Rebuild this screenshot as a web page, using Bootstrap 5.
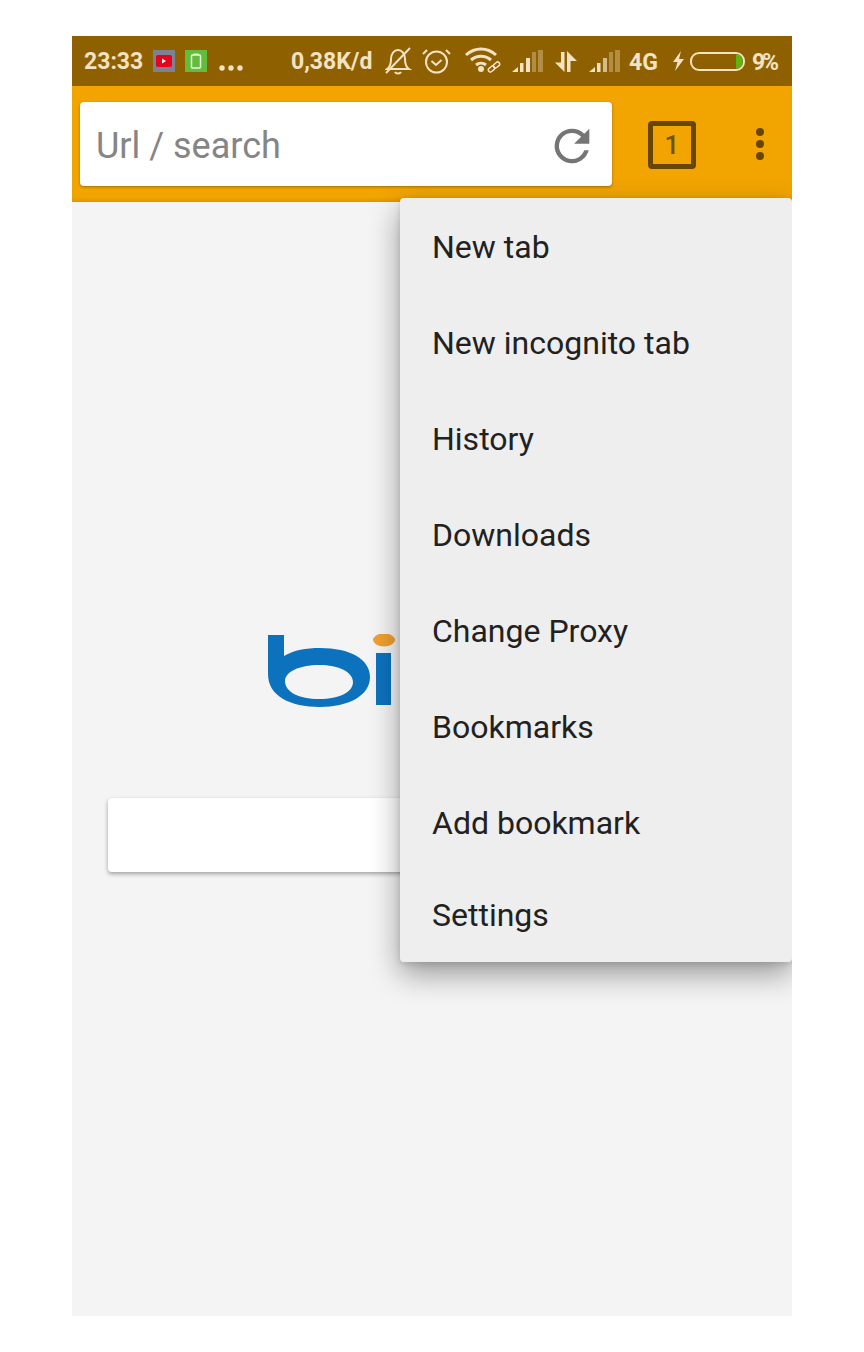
<!DOCTYPE html>
<html lang="en">
<head>
  <meta charset="UTF-8"/>
  <meta name="viewport" content="width=device-width, initial-scale=1.0"/>
  <title>Browser menu</title>
  <link href="https://cdn.jsdelivr.net/npm/bootstrap@5.3.0/dist/css/bootstrap.min.css" rel="stylesheet"/>
  <style>
    body {
      background: #fff;
      font-family: Roboto, sans-serif;
    }
    .phone {
      width: 720px;
      height: 1280px;
      margin: 36px 0 0 72px;
      background: #f4f4f4;
      overflow: hidden;
    }
    .status-bar {
      height: 50px;
      background: #8f6000;
      color: #f3e3c4;
      font-size: 23px;
      font-weight: 700;
      padding: 0 0 0 12px;
    }
    .status-time { width: 69px; padding-top: 3px; }
    .status-speed { margin-left: 42px; width: 94px; padding-top: 3px; white-space: nowrap; }
    .status-icons text { font-family: Roboto, sans-serif; font-size: 23px; font-weight: 700; fill: #f3e3c4; }
    .tool-bar {
      height: 116px;
      background: #f2a500;
      box-shadow: inset 0 -4px 4px -2px #d99400;
      padding: 16px 0 0 8px;
    }
    .url-box {
      width: 532px;
      height: 84px;
      background: #fff;
      border-radius: 4px;
      box-shadow: 0 1px 3px rgba(0,0,0,.35);
      padding: 4px 14px 0 16px;
      color: #858585;
      font-size: 36px;
    }
    .tab-count {
      width: 48px;
      height: 48px;
      margin: 19px 0 0 36px;
      border: 5px solid #684500;
      border-radius: 4px;
      color: #6f5210;
      font-size: 26px;
      font-weight: 500;
      line-height: 1;
    }
    .dots-wrap { margin: 26px 0 0 60px; gap: 4px; }
    .dot-one { width: 8px; height: 8px; border-radius: 50%; background: #684500; }
    .start-page { height: 1114px; padding-top: 432px; position: relative; }
    .bing-logo { margin-left: 196px; display: block; }
    .search-box {
      width: 648px;
      height: 74px;
      margin: 86px 0 0 36px;
      background: #fff;
      border-radius: 4px;
      box-shadow: 0 2px 4px rgba(0,0,0,.35);
    }
    .over-menu {
      position: absolute;
      top: -4px;
      right: 0;
      width: 392px;
      height: 764px;
      background: #eee;
      border-radius: 4px;
      box-shadow: 0 12px 30px rgba(0,0,0,.38), 0 2px 6px rgba(0,0,0,.12);
      color: #212121;
      font-size: 32px;
    }
    .over-menu a {
      display: flex;
      align-items: center;
      height: 96px;
      padding: 2px 0 0 32px;
      color: inherit;
      text-decoration: none;
    }
    .over-menu a:last-child { height: 88px; }
  </style>
</head>
<body>
  <div class="phone">
    <!-- Status bar -->
    <div class="status-bar d-flex align-items-center">
      <span class="status-time flex-shrink-0">23:33</span>
      <svg width="96" height="24" viewBox="0 0 96 24" class="flex-shrink-0">
        <rect x="0" y="1" width="22" height="22" fill="#7b8294"/>
        <rect x="3" y="6" width="16" height="12" rx="2" fill="#e8001c"/>
        <path d="M9 9.500l4 2.500-4 2.500z" fill="#fff"/>
        <rect x="32" y="1" width="22" height="22" fill="#63bd3c"/>
        <rect x="38.500" y="6" width="9" height="13" rx="1" fill="none" stroke="#e8f5df" stroke-width="1.500"/>
        <rect x="40.500" y="4.500" width="5" height="1.500" fill="#e8f5df"/>
        <circle cx="69" cy="19" r="2.700" fill="#f3e3c4"/>
        <circle cx="78" cy="19" r="2.700" fill="#f3e3c4"/>
        <circle cx="87" cy="19" r="2.700" fill="#f3e3c4"/>
      </svg>
      <span class="status-speed flex-shrink-0">0,38K/d</span>
      <svg class="status-icons flex-shrink-0" width="394" height="34" viewBox="0 0 394 34">
        <g fill="none" stroke="#f3e3c4" stroke-width="2">
          <!-- muted bell -->
          <path d="M2 25c3-2 4-5 4-10 0-5 3-9 7-9s7 4 7 9c0 5 1 8 4 10z"/>
          <path d="M10 28c1 2 5 2 6 0"/>
          <path d="M1 29L25 4"/>
          <!-- alarm -->
          <circle cx="51.500" cy="18" r="10.500"/>
          <path d="M46.500 17l4.500 4 5.500-5"/>
          <path d="M42 6l-4 4M61 6l4 4"/>
        </g>
        <!-- wifi -->
        <g fill="none" stroke="#f3e3c4" stroke-width="3">
          <path d="M81 11c9-8 21-8 30 0"/>
          <path d="M86 16c6-5 14-5 20 0"/>
          <path d="M91 21c3-2.500 7-2.500 10 0"/>
        </g>
        <circle cx="96" cy="25" r="3" fill="#f3e3c4"/>
        <g fill="none" stroke="#f3e3c4" stroke-width="1.500">
          <rect x="103" y="23" width="7" height="4" rx="2" transform="rotate(-40 106.500 25)"/>
          <rect x="108" y="19" width="7" height="4" rx="2" transform="rotate(-40 111.500 21)"/>
        </g>
        <g fill="#f3e3c4">
          <!-- signal one -->
          <path d="M127 28l6-5v5z"/>
          <rect x="135" y="19" width="3.500" height="9"/>
          <rect x="141" y="14" width="4" height="14"/>
          <rect x="147" y="8" width="4" height="20" opacity=".35"/>
          <rect x="153" y="6" width="5" height="22" opacity=".35"/>
          <!-- data arrows -->
          <path d="M176 8h3.500v20l-9.500-9.500h6z"/>
          <path d="M182 7l10 10h-6.500v11H182z"/>
          <!-- signal two -->
          <path d="M204 28l6-5v5z"/>
          <rect x="212" y="19" width="3.500" height="9"/>
          <rect x="218" y="14" width="4" height="14" opacity=".7"/>
          <rect x="224" y="8" width="4" height="20" opacity=".35"/>
          <rect x="230" y="6" width="5" height="22" opacity=".35"/>
          <!-- charging bolt -->
          <path d="M296 7L288 18h4.500L290 27l9-12h-5l2-8z"/>
        </g>
        <text x="244" y="26">4G</text>
        <!-- battery -->
        <rect x="306" y="9" width="53" height="17" rx="8" fill="none" stroke="#f3e3c4" stroke-width="2"/>
        <path d="M351 10.500h1.500c3 0 5 3 5 7s-2 7-5 7H351z" fill="#5fb312"/>
        <text x="367" y="26" textLength="27">9%</text>
      </svg>
    </div>

    <!-- Toolbar -->
    <div class="tool-bar d-flex align-items-start">
      <div class="url-box d-flex align-items-center justify-content-between">
        <span>Url / search</span>
        <svg width="52" height="52" viewBox="0 0 24 24" class="flex-shrink-0"><path fill="#757575" d="M17.650 6.350A7.958 7.958 0 0 0 12 4a8 8 0 1 0 7.730 10h-2.080A6 6 0 1 1 12 6c1.660 0 3.140.69 4.220 1.780L13 11h7V4z"/></svg>
      </div>
      <div class="tab-count d-flex align-items-center justify-content-center">1</div>
      <div class="dots-wrap d-flex flex-column">
        <span class="dot-one"></span>
        <span class="dot-one"></span>
        <span class="dot-one"></span>
      </div>
    </div>

    <!-- Start page with open menu -->
    <div class="start-page">
      <svg class="bing-logo" width="132" height="78" viewBox="0 0 132 78">
        <path fill="#0d72bd" fill-rule="evenodd" d="M0 1h16v21c10-6 22-8 36-8 30 0 50 11 50 29 0 19-22 30-50 30C22 73 0 62 0 40zM17 47c0 11 14 18 34 18 21 0 34-7 34-17 0-10-14-17-34-17-20 0-34 7-34 16z"/>
        <rect x="108" y="19" width="15" height="52" fill="#0d72bd"/>
        <ellipse cx="116" cy="6" rx="11" ry="6.500" fill="#f0a030"/>
      </svg>
      <div class="search-box"></div>
      <nav class="over-menu">
        <a href="#">New tab</a>
        <a href="#">New incognito tab</a>
        <a href="#">History</a>
        <a href="#">Downloads</a>
        <a href="#">Change Proxy</a>
        <a href="#">Bookmarks</a>
        <a href="#">Add bookmark</a>
        <a href="#">Settings</a>
      </nav>
    </div>
  </div>
  <script src="https://cdn.jsdelivr.net/npm/bootstrap@5.3.0/dist/js/bootstrap.bundle.min.js"></script>
</body>
</html>
